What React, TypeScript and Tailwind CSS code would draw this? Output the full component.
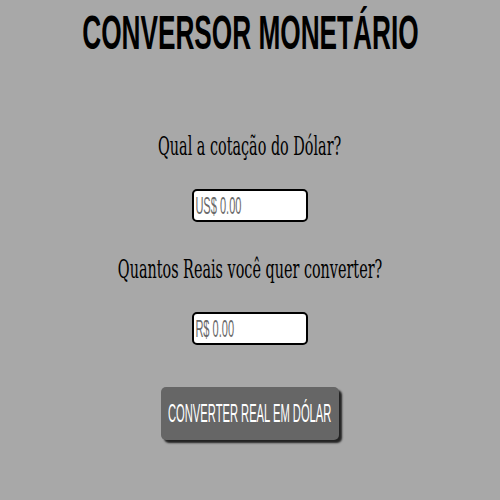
function FakeInput({ placeholder }: { placeholder: string }) {
  return (
    <div className="w-[116px] h-[33px] bg-white border-2 border-black rounded-[5px] flex items-center overflow-hidden">
      <span className="inline-block origin-left scale-x-[0.46] pl-[3px] whitespace-nowrap font-['Liberation_Sans',Arial,sans-serif] text-[24px] leading-none text-[#6b6b6b]">
        {placeholder}
      </span>
    </div>
  );
}

function Label({ children }: { children: string }) {
  return (
    <p className="h-[30px] flex items-center justify-center whitespace-nowrap">
      <span className="inline-block scale-x-[0.553] font-['DejaVu_Serif','Liberation_Serif',serif] text-[26px] leading-none text-black">
        {children}
      </span>
    </p>
  );
}

export default function App() {
  return (
    <div className="min-h-[500px] w-full bg-[#a8a8a8] flex flex-col items-center overflow-hidden">
      <h1 className="mt-[6px] h-[52px] flex items-center justify-center whitespace-nowrap">
        <span className="inline-block scale-x-[0.535] font-['Liberation_Sans',Arial,sans-serif] font-bold text-[49px] leading-none text-black">
          CONVERSOR MONETÁRIO
        </span>
      </h1>

      <div className="mt-[73px]">
        <Label>Qual a cotação do Dólar?</Label>
      </div>

      <div className="mt-[28px]">
        <FakeInput placeholder="US$ 0.00" />
      </div>

      <div className="mt-[32px]">
        <Label>Quantos Reais você quer converter?</Label>
      </div>

      <div className="mt-[28px]">
        <FakeInput placeholder="R$ 0.00" />
      </div>

      <button className="mt-[42px] w-[178px] h-[53px] bg-[#666666] rounded-[5px] shadow-[3px_3px_2px_rgba(0,0,0,0.8)] flex items-center justify-center whitespace-nowrap">
        <span className="inline-block scale-x-[0.447] font-['Liberation_Sans',Arial,sans-serif] text-[25px] leading-none text-white">
          CONVERTER REAL EM DÓLAR
        </span>
      </button>
    </div>
  );
}
